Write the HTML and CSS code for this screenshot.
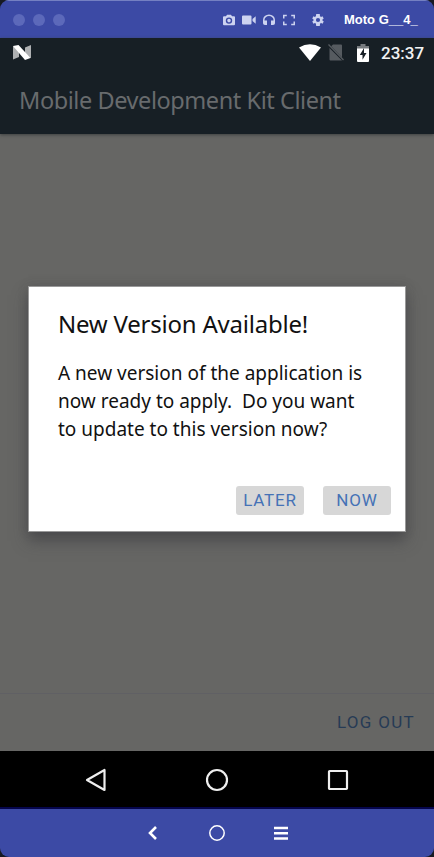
FILE: index.html
```html
<!DOCTYPE html>
<html lang="en">
<head>
<meta charset="utf-8">
<title>Mobile Development Kit Client</title>
<link rel="stylesheet" href="styles.css">
</head>
<body>
<div class="emulator">
  <header class="window-bar">
    <div class="dots"><i></i><i></i><i></i></div>
    <div class="tools">
      <svg width="12" height="12" viewBox="0 0 12 12"><path fill-rule="evenodd" d="M4 .8h4l1 1.4h2q1 0 1 1v7q0 1-1 1H1q-1 0-1-1v-7q0-1 1-1h2zM6 3.4a3.2 3.2 0 1 0 0 6.4 3.2 3.2 0 0 0 0-6.4zm0 1.4a1.8 1.8 0 1 1 0 3.6 1.8 1.8 0 0 1 0-3.6z"/></svg>
      <svg width="14" height="12" viewBox="0 0 14 12"><path d="M1 1.500h7.500q1 0 1 1v7q0 1-1 1H1q-1 0-1-1v-7q0-1 1-1zM10.500 5l3.200-2.800v7.600l-3.200-2.800z"/></svg>
      <svg width="12" height="12" viewBox="0 0 12 12"><path d="M0 6a6 5.5 0 0 1 12 0v3.2Q12 11 10 11H8V6.5h2.500V6a4.500 4 0 0 0-9 0v.5H4V11H2Q0 11 0 9.200z"/></svg>
      <svg width="12" height="12" viewBox="0 0 12 12"><path d="M0 .8h3.800v1.500H1.500v2.200H0zM8.200.8H12v3.700h-1.500V2.300H8.200zM0 7.500h1.500v2.200h2.300v1.500H0zM10.500 7.500H12v3.700H8.200V9.700h2.300z"/></svg>
      <svg class="gear" width="12" height="12" viewBox="2 2 20 20"><path d="M19.400 13a7.500 7.500 0 0 0 0-2l2.100-1.600-2-3.500-2.500 1a7.500 7.500 0 0 0-1.700-1L15 2H9l-.4 3.900a7.500 7.500 0 0 0-1.700 1l-2.500-1-2 3.500L4.600 11a7.500 7.500 0 0 0 0 2l-2.200 1.600 2 3.500 2.500-1a7.500 7.500 0 0 0 1.700 1L9 22h6l.4-3.900a7.500 7.500 0 0 0 1.700-1l2.500 1 2-3.500zM12 15.500a3.500 3.500 0 1 1 0-7 3.500 3.500 0 0 1 0 7z"/></svg>
    </div>
    <span class="device">Moto G__4_</span>
  </header>
  <div class="app-head">
    <div class="status">
      <svg class="n-logo" width="18" height="15" viewBox="0 0 18 15"><path fill="#aeb0b2" d="M0 1l6 3v8l-6 2.500zM12 2.500L18 0v13l-6-1z"/><path fill="#fff" d="M0 1l5.500-1L17.500 13l-5.500 2z"/></svg>
      <svg class="wifi" width="22" height="17" viewBox="0 0 22 17"><path fill="#fff" d="M0 3.500Q11-3.200 22 3.500L11 17z"/></svg>
      <svg class="sim" width="16" height="17" viewBox="0 0 16 17"><path fill="#565b60" d="M5 .5h8q1 0 1 1v12L3.200 2.200zM1.500 4L14 16.500H2.500q-1 0-1-1z"/><path stroke="#565b60" stroke-width="1.300" d="M.5.500l15 15.500"/></svg>
      <svg class="battery" width="12" height="18" viewBox="0 0 12 18"><path fill="#777b7f" d="M3.500 0h5v2H12v3H0V2h3.500z"/><path fill="#fff" d="M0 4.500h12V17q0 1-1 1H1q-1 0-1-1z"/><path fill="#182027" d="M7 4L2.800 11h2.700v4.800L9.500 9H7z"/></svg>
      <span class="clock">23:37</span>
    </div>
    <h1>Mobile Development Kit Client</h1>
  </div>
  <main class="content">
    <section class="dialog">
      <h2>New Version Available!</h2>
      <p>A new version of the application is<br>now ready to apply.&nbsp; Do you want<br>to update to this version now?</p>
      <div class="actions"><button>LATER</button><button>NOW</button></div>
    </section>
    <footer class="toolbar"><span class="logout">LOG OUT</span></footer>
  </main>
  <nav class="android-nav">
    <svg width="22" height="24" viewBox="0 0 22 24"><path d="M19.500 2v20L2 12z"/></svg>
    <svg width="24" height="24" viewBox="0 0 24 24"><circle cx="12" cy="12" r="10"/></svg>
    <svg width="22" height="22" viewBox="0 0 22 22"><rect x="2" y="2" width="18" height="18" rx=".7"/></svg>
  </nav>
  <nav class="emulator-nav">
    <svg width="10" height="14" viewBox="0 0 10 14"><path stroke-width="2.600" d="M8 1L2 7l6 6"/></svg>
    <svg width="16" height="16" viewBox="0 0 16 16"><circle cx="8" cy="8" r="7.200" stroke-width="1.500"/></svg>
    <svg width="14" height="14" viewBox="0 0 14 14"><path stroke-width="2.400" d="M0 2h14M0 7.300h14M0 12.500h14"/></svg>
  </nav>
</div>
</body>
</html>
```
FILE: styles.css
```css
* { box-sizing: border-box; }
body { margin: 0; background: #171a23; font-family: "Noto Sans", sans-serif; }
h1, h2, p { margin: 0; font-weight: 400; white-space: nowrap; }
svg { display: block; flex: none; }

.emulator { width: 434px; height: 857px; display: flex; flex-direction: column; overflow: hidden; border-radius: 9px; background: #3c4aa5; }

.window-bar { height: 38px; display: flex; align-items: center; border-top: 1px solid #7480c2; color: #fff; }
.dots { display: flex; gap: 8px; padding-left: 13px; width: 223px; }
.dots i { width: 12px; height: 12px; border-radius: 50%; background: #5c69ba; }
.tools { display: flex; align-items: center; gap: 7px; width: 121px; fill: #cdd3f0; }
.tools svg:nth-child(4) { margin-left: 1px; }
.tools .gear { margin-left: 10px; }
.device { font: bold 13px/16px "Liberation Sans", sans-serif; }

.app-head { height: 96px; background: #171f25; box-shadow: 0 1px 3px #3e4040; z-index: 1; }
.status { display: flex; align-items: center; height: 29px; padding-left: 13px; }
.wifi { margin-left: 268px; }
.sim { margin-left: 7px; }
.battery { margin-left: 13px; }
.clock { margin-left: 12px; font: 500 17px/20px Roboto, sans-serif; color: #f2f3f4; }
h1 { padding: 16px 0 0 19px; font-size: 23.500px; line-height: 34px; letter-spacing: -.43px; color: #686b6d; }

.content { height: 617px; background: #666664; display: flex; flex-direction: column; }
.dialog { width: 378px; height: 246px; margin: 152px 0 0 28px; padding: 20px 14px 16px 29px; display: flex; flex-direction: column; background: #fff; border: 1px solid #999; box-shadow: 0 9px 14px rgba(55, 55, 60, .55), 0 0 10px rgba(60, 60, 65, .2); color: #111; }
h2 { font-size: 24px; line-height: 34px; letter-spacing: -.22px; }
.dialog p { margin-top: 18px; font-size: 19px; line-height: 28px; }
.actions { display: flex; justify-content: flex-end; gap: 19px; margin-top: auto; }
button { width: 68px; height: 29px; padding: 0; border: 0; border-radius: 3px; background: #d7d7d7; color: #4572b6; font: 17px/29px Roboto, sans-serif; letter-spacing: .8px; }
.toolbar { height: 58px; margin-top: auto; padding: 0 19px 2px 0; display: flex; justify-content: flex-end; align-items: center; border-top: 1px solid #606064; }
.logout { font: 17px/24px Roboto, sans-serif; color: #263b55; letter-spacing: 1.3px; }

.android-nav { height: 58px; display: flex; align-items: center; background: #000; border-bottom: 2px solid #05054c; padding: 2px 0 0 85px; fill: none; stroke: #eee; stroke-width: 2.2; stroke-linejoin: round; }
.android-nav svg + svg { margin-left: 98px; }
.emulator-nav { height: 48px; display: flex; align-items: center; padding-left: 148px; fill: none; stroke: #fff; }
.emulator-nav svg:nth-child(2) { margin-left: 51px; }
.emulator-nav svg:nth-child(3) { margin-left: 49px; }
```
